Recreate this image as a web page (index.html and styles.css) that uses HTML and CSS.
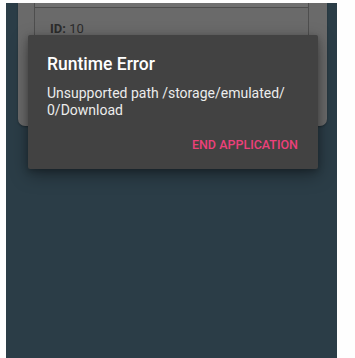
FILE: index.html
```html
<!DOCTYPE html>
<html lang="en">
<head>
    <meta charset="UTF-8">
    <title>Runtime Error</title>
    <link rel="stylesheet" href="styles.css">
</head>
<body>
    <div class="screen">
        <div class="card">
            <div class="record">
                <div class="record-id"><b>ID:</b> 10</div>
            </div>
        </div>

        <div class="dialog">
            <div class="dialog-title">Runtime Error</div>
            <div class="dialog-message">Unsupported path /storage/emulated/<br>0/Download</div>
            <div class="dialog-actions">
                <button class="dialog-button">END APPLICATION</button>
            </div>
        </div>
    </div>
</body>
</html>
```

FILE: styles.css
```css
body {
    margin: 0;
    background-color: #fefefe;
    font-family: Roboto, 'Noto Sans', sans-serif;
}
.screen {
    position: relative;
    margin: 3px 18px 0 6px;
    height: 355px;
    background-color: #2b3d47;
    overflow: hidden;
}
.card {
    margin: 0 10px 0 12px;
    height: 123px;
    padding: 0 18px 0 16px;
    background-color: #6a6a6a;
    border-radius: 0 0 7px 7px;
    box-shadow: 0 1px 2px rgba(0,0,0,0.3);
    box-sizing: border-box;
}
.record {
    height: 110px;
    border-left: 1px solid #4e4e4e;
    border-right: 1px solid #4e4e4e;
    background: linear-gradient(#707070 4px, #4e4e4e 4px, #4e4e4e 5px, #6a6a6a 5px);
    padding: 18px 15px 0;
    box-sizing: border-box;
}
.record-id {
    font-size: 13px;
    color: #2c2c2c;
}
.dialog {
    position: absolute;
    top: 32px;
    left: 22px;
    width: 290px;
    height: 134px;
    padding: 17px 19px 0;
    box-sizing: border-box;
    background-color: #424242;
    border-radius: 2px;
    box-shadow: 0 6px 18px rgba(0,0,0,0.35), 0 2px 6px rgba(0,0,0,0.25);
}
.dialog-title {
    font-size: 17.5px;
    font-weight: 500;
    color: #ffffff;
    line-height: 24px;
}
.dialog-message {
    margin-top: 9px;
    font-size: 14px;
    line-height: 17px;
    color: #ececec;
}
.dialog-actions {
    display: flex;
    justify-content: flex-end;
    margin-top: 18px;
}
.dialog-button {
    padding: 0;
    border: none;
    background: none;
    font-family: inherit;
    font-size: 12.5px;
    font-weight: 500;
    color: #ec407a;
    margin-right: 1px;
}
```
